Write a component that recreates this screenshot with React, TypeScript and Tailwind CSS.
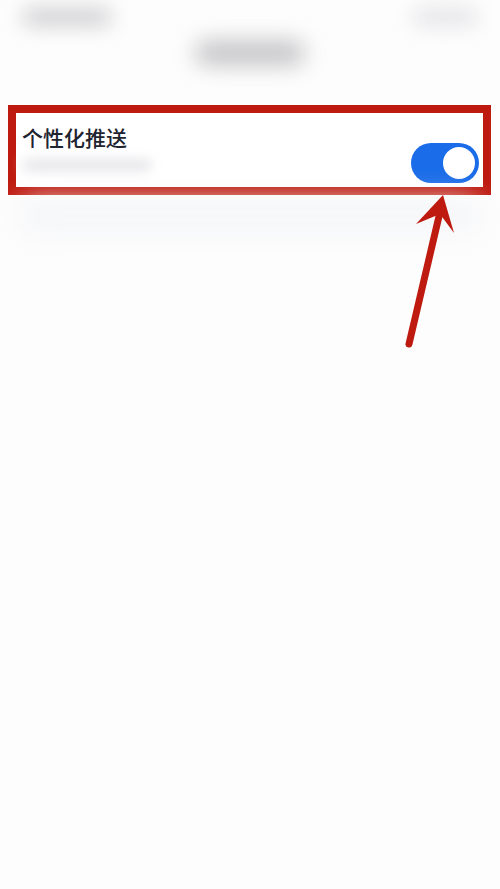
import React from 'react'

const font = '"Noto Sans CJK SC", "Noto Sans", sans-serif'

// blurred status bar + nav title
const TopBar = () => (
  <div className="h-[105px] w-full">
    <div className="flex h-[34px] items-center justify-between px-[22px]">
      <div className="h-[18px] w-[90px] rounded-full bg-[#cfcfd2] blur-[10px]" />
      <div className="h-[18px] w-[66px] rounded-full bg-[#e4e4e8] blur-[10px]" />
    </div>
    <div className="flex h-[38px] items-center justify-center">
      <div className="h-[24px] w-[110px] rounded-full bg-[#c2c2c5] blur-[11px]" />
    </div>
  </div>
)

const Toggle = ({ on }: { on: boolean }) => (
  <div
    className={`flex h-[40px] w-[68px] items-center rounded-full px-[2px] ${
      on ? 'justify-end bg-[#1a6ce8]' : 'justify-start bg-gray-300'
    }`}
  >
    <div className="h-[36px] w-[36px] rounded-full border-2 border-[#1a6ce8] bg-white" />
  </div>
)

export default function App() {
  return (
    <div className="relative min-h-[889px] w-[500px] overflow-hidden bg-[#fdfdfd]" style={{ fontFamily: font }}>
      <TopBar />

      <div className="ml-[8px] mr-[9px] border-8 border-[#be1a0f] bg-white">
        <div className="flex h-[74px] items-start justify-between pl-[6px] pr-[4px]">
          <div className="flex flex-col pt-[10px]">
            <span className="text-[21px] leading-[28px] font-medium text-[#1e2330]">个性化推送</span>
            <div className="mt-[8px] h-[12px] w-[130px] rounded-full bg-[#e6e6ea] blur-[6px]" />
          </div>
          <div className="pt-[30px]">
            <Toggle on />
          </div>
        </div>
      </div>

      {/* faint row below, out of focus */}
      <div className="mx-[20px] mt-[6px] h-[30px] rounded-full bg-[#f4f5f8] blur-[14px]" />

      {/* pointer arrow */}
      <svg className="pointer-events-none absolute left-0 top-0" width="500" height="889" viewBox="0 0 500 889">
        <line x1="409" y1="344" x2="440" y2="212" stroke="#be1a0f" strokeWidth="7" strokeLinecap="round" />
        <polygon points="443,195 416,224 440,214 454,233" fill="#be1a0f" />
      </svg>
    </div>
  )
}
